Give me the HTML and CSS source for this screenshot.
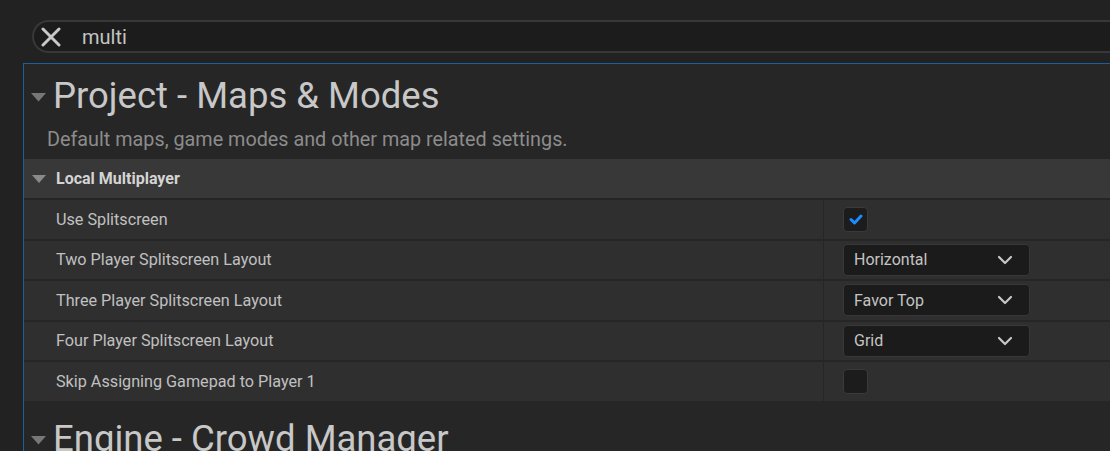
FILE: index.html
```html
<!DOCTYPE html>
<html>
<head>
<meta charset="utf-8">
<link rel="stylesheet" href="styles.css">
</head>
<body>
<div class="search">
  <svg class="clear" width="20" height="20" viewBox="0 0 20 20"><path d="M2 2 L18 18 M18 2 L2 18" stroke="#c8c8c8" stroke-width="3" stroke-linecap="round"/></svg>
  <span class="query">multi</span>
</div>
<div class="panel">
  <div class="section-head">
    <svg class="tri big" width="15" height="9" viewBox="0 0 15 9"><path d="M0 0 H15 L7.5 8.5 Z" fill="#777"/></svg>
    <span class="section-title">Project - Maps &amp; Modes</span>
  </div>
  <div class="section-desc">Default maps, game modes and other map related settings.</div>
  <div class="category">
    <svg class="tri" width="14" height="8" viewBox="0 0 14 8"><path d="M0 0 H14 L7 8 Z" fill="#8a8a8a"/></svg>
    <span>Local Multiplayer</span>
  </div>
  <div class="row">
    <div class="name">Use Splitscreen</div>
    <div class="value"><div class="check on"><svg width="14" height="11" viewBox="0 0 14 11"><path d="M2 5.5 L5.5 9 L12 2" stroke="#1a8cff" stroke-width="3" fill="none" stroke-linecap="round" stroke-linejoin="round"/></svg></div></div>
  </div>
  <div class="row">
    <div class="name">Two Player Splitscreen Layout</div>
    <div class="value"><div class="combo"><span>Horizontal</span><svg width="16" height="10" viewBox="0 0 16 10"><path d="M2 2 L8 8 L14 2" stroke="#c8c8c8" stroke-width="2.2" fill="none" stroke-linecap="round" stroke-linejoin="round"/></svg></div></div>
  </div>
  <div class="row">
    <div class="name">Three Player Splitscreen Layout</div>
    <div class="value"><div class="combo"><span>Favor Top</span><svg width="16" height="10" viewBox="0 0 16 10"><path d="M2 2 L8 8 L14 2" stroke="#c8c8c8" stroke-width="2.2" fill="none" stroke-linecap="round" stroke-linejoin="round"/></svg></div></div>
  </div>
  <div class="row">
    <div class="name">Four Player Splitscreen Layout</div>
    <div class="value"><div class="combo"><span>Grid</span><svg width="16" height="10" viewBox="0 0 16 10"><path d="M2 2 L8 8 L14 2" stroke="#c8c8c8" stroke-width="2.2" fill="none" stroke-linecap="round" stroke-linejoin="round"/></svg></div></div>
  </div>
  <div class="row">
    <div class="name">Skip Assigning Gamepad to Player 1</div>
    <div class="value"><div class="check"></div></div>
  </div>
  <div class="section-head next">
    <svg class="tri big" width="15" height="9" viewBox="0 0 15 9"><path d="M0 0 H15 L7.5 8.5 Z" fill="#777"/></svg>
    <span class="section-title">Engine - Crowd Manager</span>
  </div>
</div>
</body>
</html>
```

FILE: styles.css
```css
html, body {
  margin: 0;
  padding: 0;
  background: #222222;
  overflow: hidden;
  height: 451px;
  font-family: Roboto, "Noto Sans", sans-serif;
}

.search {
  margin: 20px 0 0 32px;
  height: 33px;
  width: 1100px;
  box-sizing: border-box;
  border: 2px solid #383838;
  border-right: none;
  border-radius: 17px 0 0 17px;
  background: #1c1c1c;
  display: flex;
  align-items: center;
}

.clear {
  margin-left: 7px;
  flex: none;
}

.query {
  margin-left: 21px;
  font-size: 20px;
  color: #c4c4c4;
}

.panel {
  margin: 10px 0 0 23px;
  border-left: 1px solid #1c5f9c;
  border-top: 1px solid #1c5f9c;
  background: #262626;
  height: 400px;
  overflow: hidden;
}

.section-head {
  display: flex;
  align-items: center;
  height: 62px;
  padding-left: 7px;
}

.section-head .tri {
  flex: none;
  margin-top: 4px;
}

.section-title {
  font-size: 36.5px;
  color: #c8c8c8;
  margin-left: 7px;
  white-space: nowrap;
}

.section-desc {
  padding-left: 23px;
  font-size: 19.8px;
  color: #8c8c8c;
  height: 33px;
  line-height: 28px;
  white-space: nowrap;
}

.category {
  height: 39px;
  background: #383838;
  border-bottom: 2px solid #252525;
  display: flex;
  align-items: center;
  padding-left: 8px;
  font-size: 16px;
  font-weight: bold;
  color: #d4d4d4;
}

.category .tri {
  margin-right: 10px;
}

.row {
  display: flex;
  height: 38.5px;
  background: #2f2f2f;
  border-bottom: 2px solid #262626;
}

.name {
  width: 767px;
  padding-left: 32px;
  display: flex;
  align-items: center;
  font-size: 16.2px;
  color: #c0c0c0;
  border-right: 1px solid #262626;
  flex: none;
  white-space: nowrap;
}

.value {
  display: flex;
  align-items: center;
  padding-left: 19px;
}

.check {
  width: 25px;
  height: 25px;
  box-sizing: border-box;
  border: 1px solid #3a3a3a;
  border-radius: 4px;
  background: #1c1c1c;
  display: flex;
  align-items: center;
  justify-content: center;
}

.combo {
  width: 187px;
  height: 32px;
  box-sizing: border-box;
  border: 1px solid #383838;
  border-radius: 4px;
  background: #1b1b1b;
  display: flex;
  align-items: center;
  justify-content: space-between;
  padding: 0 16px 0 10px;
  font-size: 16px;
  color: #c4c4c4;
}

.section-head.next {
  height: 60px;
  padding-top: 6px;
}
```
